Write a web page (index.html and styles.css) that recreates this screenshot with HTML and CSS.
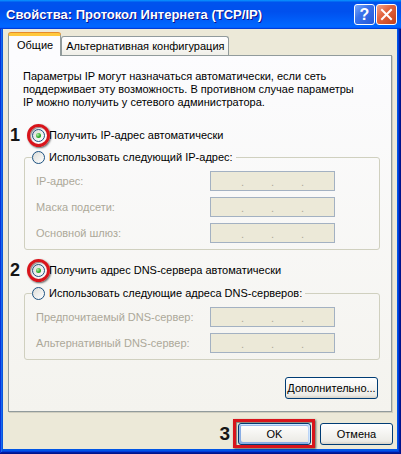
FILE: index.html
```html
<!DOCTYPE html>
<html lang="ru">

<head>
    <meta charset="UTF-8">
    <meta name="viewport" content="width=device-width, initial-scale=1.0">
    <title>Свойства: Протокол Интернета (TCP/IP)</title>
    <link rel="stylesheet" href="styles.css">
</head>

<body>
    <div class="window">
        <div class="title-bar">
            <span class="title-text">Свойства: Протокол Интернета (TCP/IP)</span>
            <div class="title-controls">
                <button class="ctrl help">?</button>
                <button class="ctrl close">
                    <svg width="13" height="13" viewBox="0 0 13 13">
                        <path d="M2 2 L11 11 M11 2 L2 11" stroke="#fff" stroke-width="2" stroke-linecap="square" />
                    </svg>
                </button>
            </div>
        </div>

        <div class="window-body">
            <div class="tabs">
                <div class="tab active">Общие</div>
                <div class="tab">Альтернативная конфигурация</div>
            </div>

            <div class="panel">
                <p class="intro">Параметры IP могут назначаться автоматически, если сеть<br>поддерживает эту возможность. В противном случае параметры<br>IP можно получить у сетевого администратора.</p>

                <!-- IP -->
                <div class="option opt-ip">
                    <span class="step">1</span>
                    <span class="radio checked"><span class="ring"></span></span>
                    <span>Получить IP-адрес автоматически</span>
                </div>

                <fieldset class="group">
                    <legend class="option">
                        <span class="radio"></span>
                        <span>Использовать следующий IP-адрес:</span>
                    </legend>
                    <div class="fields">
                        <div class="field-row">
                            <span class="field-label">IP-адрес:</span>
                            <div class="ip"><span></span><i>.</i><span></span><i>.</i><span></span><i>.</i><span></span></div>
                        </div>
                        <div class="field-row">
                            <span class="field-label">Маска подсети:</span>
                            <div class="ip"><span></span><i>.</i><span></span><i>.</i><span></span><i>.</i><span></span></div>
                        </div>
                        <div class="field-row">
                            <span class="field-label">Основной шлюз:</span>
                            <div class="ip"><span></span><i>.</i><span></span><i>.</i><span></span><i>.</i><span></span></div>
                        </div>
                    </div>
                </fieldset>

                <!-- DNS -->
                <div class="option opt-dns">
                    <span class="step">2</span>
                    <span class="radio checked"><span class="ring"></span></span>
                    <span>Получить адрес DNS-сервера автоматически</span>
                </div>

                <fieldset class="group group-dns">
                    <legend class="option">
                        <span class="radio"></span>
                        <span>Использовать следующие адреса DNS-серверов:</span>
                    </legend>
                    <div class="fields">
                        <div class="field-row">
                            <span class="field-label">Предпочитаемый DNS-сервер:</span>
                            <div class="ip"><span></span><i>.</i><span></span><i>.</i><span></span><i>.</i><span></span></div>
                        </div>
                        <div class="field-row">
                            <span class="field-label">Альтернативный DNS-сервер:</span>
                            <div class="ip"><span></span><i>.</i><span></span><i>.</i><span></span><i>.</i><span></span></div>
                        </div>
                    </div>
                </fieldset>

                <div class="panel-actions">
                    <button class="btn btn-more">Дополнительно...</button>
                </div>
            </div>

            <div class="dialog-actions">
                <span class="step step-inline">3</span>
                <span class="marked">
                    <button class="btn default">OK</button>
                    <span class="frame"></span>
                </span>
                <button class="btn">Отмена</button>
            </div>
        </div>
    </div>
</body>

</html>
```

FILE: styles.css
```css
* {
    box-sizing: border-box;
}

body {
    margin: 0;
    background-color: #2a5bd7;
    font-family: "Liberation Sans", Arial, sans-serif;
    font-size: 11px;
    color: #000;
}

.window {
    width: 401px;
    height: 454px;
    display: flex;
    flex-direction: column;
    background-color: #0055e5;
    box-shadow: inset -1px -1px #00138c, inset 1px 1px #0831d9, inset -2px -2px #001ea0,
        inset 2px 2px #166aee, inset -3px -3px #003bda, inset 3px 3px #0855dd;
}

/* title bar */
.title-bar {
    flex: none;
    height: 29px;
    display: flex;
    align-items: center;
    justify-content: space-between;
    padding: 0 4px 0 6px;
    background: linear-gradient(180deg, #0997ff, #0053ee 8%, #0050ee 40%, #06f 88%, #06f 93%, #005bff 95%, #003dd7 96%, #003dd7);
}

.title-text {
    color: #fff;
    font-weight: bold;
    font-size: 13px;
    text-shadow: 1px 1px #0f1089;
}

.title-controls {
    display: flex;
    gap: 1px;
}

.ctrl {
    width: 21px;
    height: 21px;
    padding: 0;
    border: 1px solid #fff;
    border-radius: 3px;
    display: flex;
    align-items: center;
    justify-content: center;
    color: #fff;
}

.help {
    background: linear-gradient(135deg, #7aa8fa, #3a72ea 40%, #2358d8);
    font-family: "Liberation Sans", sans-serif;
    font-weight: bold;
    font-size: 16px;
}

.close {
    background: linear-gradient(135deg, #f2a58c, #e3653f 40%, #c4401a);
}

/* body */
.window-body {
    flex: 1;
    margin: 0 4px 5px 3px;
    padding: 4px 5px 4px 5px;
    background-color: #ece9d8;
    display: flex;
    flex-direction: column;
}

.tabs {
    height: 22px;
    display: flex;
    align-items: flex-end;
}

.tab {
    height: 19px;
    padding: 0 4px 1px;
    display: flex;
    align-items: center;
    border: 1px solid #919b9c;
    border-bottom: none;
    border-radius: 3px 3px 0 0;
    background: linear-gradient(180deg, #fff, #fafaf9 40%, #f0efe8);
    white-space: nowrap;
}

.tab.active {
    position: relative;
    z-index: 1;
    height: 23px;
    margin-bottom: -1px;
    padding: 0 7px 2px 8px;
    border-top: 3px solid #ffc83c;
    box-shadow: 0 -1px #e68b2c;
    background: #fcfcfe;
}

.panel {
    border: 1px solid #919b9c;
    background: linear-gradient(180deg, #fcfcfe, #f4f3ee);
    box-shadow: 1px 1px #d0cebf;
    padding: 14px 11px 12px 14px;
}

.intro {
    margin: 0;
    line-height: 13px;
}

/* radio rows */
.option {
    position: relative;
    height: 16px;
    display: flex;
    align-items: center;
    gap: 4px;
    white-space: nowrap;
}

.opt-ip,
.opt-dns {
    margin-left: 9px;
}

.opt-ip {
    margin-top: 18px;
}

.opt-dns {
    margin-top: 12px;
}

.radio {
    position: relative;
    flex: none;
    width: 13px;
    height: 13px;
    border: 1px solid #1c5180;
    border-radius: 50%;
    background: linear-gradient(135deg, #dcdcd7, #fff);
}

.radio.checked::after {
    content: "";
    position: absolute;
    left: 3px;
    top: 3px;
    width: 5px;
    height: 5px;
    border-radius: 50%;
    background: radial-gradient(circle at 35% 35%, #b4ecaa, #2fae2a 55%, #1d8a1d);
}

.ring {
    position: absolute;
    left: -6px;
    top: -6px;
    width: 23px;
    height: 23px;
    border: 3px solid #d8141b;
    border-radius: 50%;
    box-shadow: 1px 1px 2px rgba(0, 0, 0, 0.6), inset 1px 1px 1px rgba(0, 0, 0, 0.45);
}

.step {
    position: absolute;
    left: -22px;
    top: -3px;
    line-height: 22px;
    font-size: 18px;
    font-weight: bold;
    color: #151515;
}

/* group boxes */
.group {
    margin: 6px 0 0 1px;
    padding: 6px 0 6px 11px;
    border: 1px solid #d0d0bf;
    border-radius: 3px;
    min-width: 0;
}

.group-dns {
    margin-top: 7px;
}

.group legend {
    margin-left: -4px;
    padding: 0 3px 0 0;
}

.fields {
    display: flex;
    flex-direction: column;
    gap: 6px;
}

.field-row {
    height: 20px;
    display: flex;
    align-items: center;
}

.field-label {
    width: 174px;
    color: #aca899;
}

.ip {
    width: 125px;
    height: 20px;
    display: flex;
    align-items: flex-end;
    padding: 0 3px 3px;
    border: 1px solid #a3b1c2;
    background-color: #ece9d8;
}

.ip span {
    flex: 1;
}

.ip i {
    font-style: normal;
    line-height: 10px;
    color: #aca899;
}

/* buttons */
.btn {
    height: 22px;
    padding: 0;
    font-family: "Liberation Sans", Arial, sans-serif;
    font-size: 11px;
    color: #000;
    border: 1px solid #003c74;
    border-radius: 3px;
    background: linear-gradient(180deg, #fff, #ecebe6 86%, #d6d0c5);
}

.btn.default {
    box-shadow: inset -1px 1px #cee7ff, inset 1px 2px #98b8ea, inset -2px 2px #bcd4f6,
        inset 1px -1px #89ade4, inset 2px -2px #89ade4;
}

.panel-actions {
    margin-top: 17px;
    padding-right: 2px;
    display: flex;
    justify-content: flex-end;
}

.btn-more {
    width: 93px;
}

.dialog-actions {
    margin-top: 11px;
    margin-right: -1px;
    height: 22px;
    display: flex;
    align-items: center;
    justify-content: flex-end;
    gap: 9px;
}

.dialog-actions .btn {
    width: 73px;
}

.step-inline {
    position: static;
    margin-right: -1px;
    font-size: 19px;
}

.marked {
    position: relative;
    display: flex;
}

.frame {
    position: absolute;
    left: -5px;
    right: -4px;
    top: -4px;
    bottom: -3px;
    border: 3px solid #d8141b;
    box-shadow: 1px 1px 2px rgba(0, 0, 0, 0.6), inset 1px 1px 1px rgba(0, 0, 0, 0.45);
}
```
